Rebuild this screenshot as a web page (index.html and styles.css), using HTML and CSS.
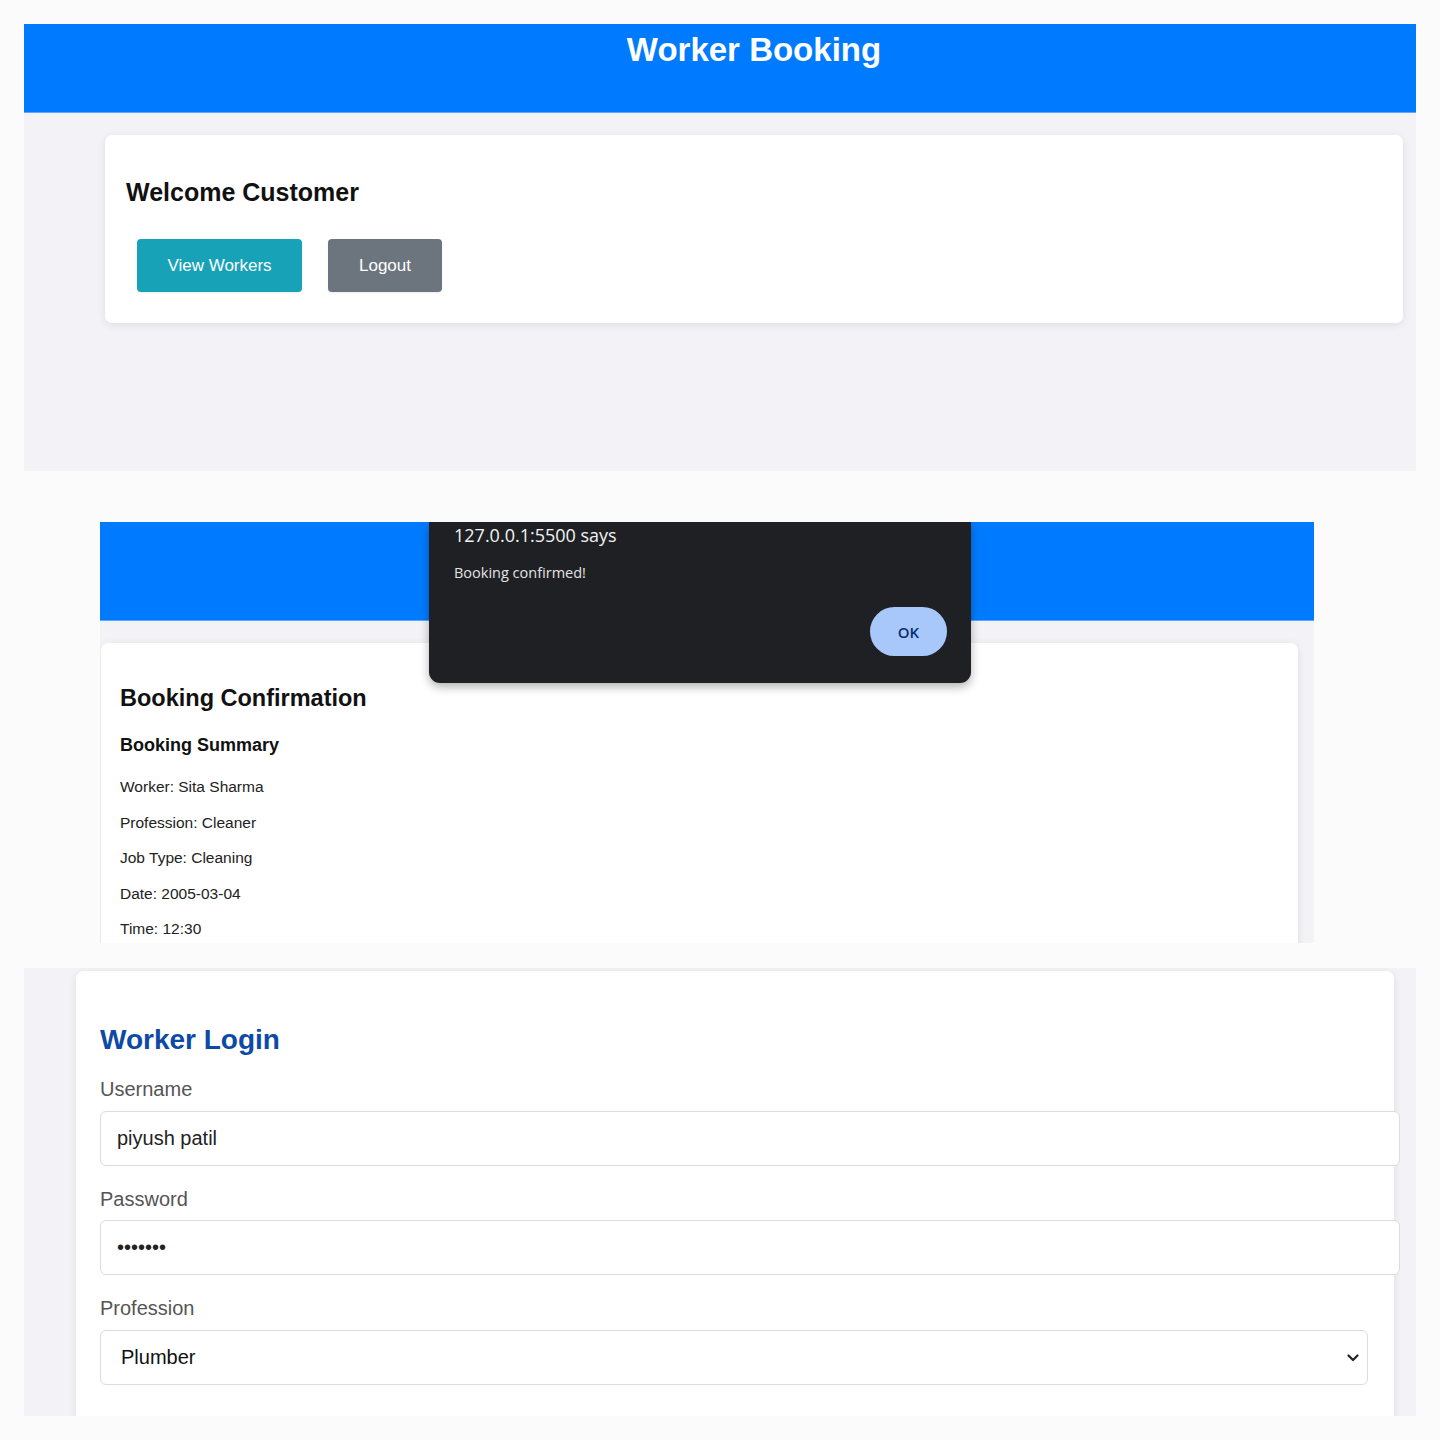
FILE: index.html
```html
<!DOCTYPE html>
<html lang="en">
<head>
<meta charset="utf-8">
<title>Worker Booking</title>
<link rel="stylesheet" href="styles.css">
</head>
<body>
<div class="collage">

  <section class="shot shot-home">
    <header class="topbar">
      <h1 class="brand">Worker Booking</h1>
    </header>
    <div class="card card-welcome">
      <h2 class="welcome-title">Welcome Customer</h2>
      <div class="btn-row">
        <button class="btn btn-info">View Workers</button>
        <button class="btn btn-secondary">Logout</button>
      </div>
    </div>
  </section>

  <section class="shot shot-confirm">
    <header class="topbar topbar-tall"></header>
    <div class="card card-confirm">
      <h2 class="confirm-title">Booking Confirmation</h2>
      <h3 class="summary-title">Booking Summary</h3>
      <p class="summary-line">Worker: Sita Sharma</p>
      <p class="summary-line">Profession: Cleaner</p>
      <p class="summary-line">Job Type: Cleaning</p>
      <p class="summary-line">Date: 2005-03-04</p>
      <p class="summary-line">Time: 12:30</p>
    </div>
    <div class="alert-dialog">
      <div class="alert-origin">127.0.0.1:5500 says</div>
      <div class="alert-message">Booking confirmed!</div>
      <div class="alert-actions">
        <button class="alert-ok">OK</button>
      </div>
    </div>
  </section>

  <section class="shot shot-login">
    <div class="card card-login">
      <h2 class="login-title">Worker Login</h2>
      <label class="field-label">Username</label>
      <input class="field-input" type="text" value="piyush patil">
      <label class="field-label">Password</label>
      <input class="field-input" type="password" value="1234567">
      <label class="field-label">Profession</label>
      <div class="select-wrap">
        <select class="field-select">
          <option>Plumber</option>
          <option>Electrician</option>
          <option>Cleaner</option>
        </select>
        <svg class="select-chevron" width="14" height="10" viewBox="0 0 14 10" aria-hidden="true">
          <path d="M2.5 2.5 L7 7 L11.5 2.5" fill="none" stroke="#222" stroke-width="2.2" stroke-linecap="round" stroke-linejoin="round"/>
        </svg>
      </div>
    </div>
  </section>

</div>
</body>
</html>
```

FILE: styles.css
```css
* {
  box-sizing: border-box;
}

html, body {
  margin: 0;
  padding: 0;
  background: #fbfbfc;
}

body {
  font-family: "Liberation Sans", Arial, sans-serif;
  color: #111;
}

.collage {
  padding: 24px 24px 0 24px;
  width: 1440px;
  height: 1440px;
}

.shot {
  background: #f3f3f7;
  overflow: hidden;
  position: relative;
}

/* ---------- panel 1 ---------- */
.shot-home {
  width: 1392px;
  height: 447px;
}

.topbar {
  background: #007bff;
  height: 89px;
  padding: 7px 0 0 68px;
  border-bottom: 1px solid #5aa6ff;
}

.brand {
  margin: 0;
  text-align: center;
  color: #fff;
  font-size: 33px;
  line-height: 38px;
  font-weight: 700;
}

.card {
  background: #fff;
  border-radius: 7px;
  box-shadow: 0 2px 8px rgba(0, 0, 0, 0.09);
}

.card-welcome {
  margin: 22px 13px 0 81px;
  height: 188px;
  padding: 43px 21px 0 21px;
}

.welcome-title {
  margin: 0;
  font-size: 25px;
  line-height: 29px;
  font-weight: 700;
  color: #111;
}

.btn-row {
  display: flex;
  gap: 26px;
  margin-top: 32px;
  padding-left: 11px;
}

.btn {
  height: 53px;
  border: none;
  border-radius: 4px;
  color: #fff;
  font-family: "Liberation Sans", Arial, sans-serif;
  font-size: 17px;
  padding: 0 30px;
  box-shadow: 0 1px 2px rgba(0, 0, 0, 0.08);
}

.btn-info {
  background: #17a2b8;
  width: 165px;
}

.btn-secondary {
  background: #6c757d;
  width: 114px;
}

/* ---------- panel 2 ---------- */
.shot-confirm {
  width: 1214px;
  height: 421px;
  margin: 51px 0 0 76px;
}

.topbar-tall {
  height: 99px;
  padding: 0;
}

.card-confirm {
  margin: 22px 16px 0 1px;
  height: 320px;
  padding: 41px 19px 0 19px;
  border-radius: 7px 7px 0 0;
}

.confirm-title {
  margin: 0;
  font-size: 23.5px;
  line-height: 28px;
  font-weight: 700;
  color: #111;
}

.summary-title {
  margin: 23px 0 0 0;
  font-size: 18px;
  line-height: 21px;
  font-weight: 700;
  color: #111;
}

.summary-line {
  margin: 0;
  font-size: 15.5px;
  line-height: 18px;
  color: #222;
}

.summary-title + .summary-line {
  margin-top: 22px;
}

.summary-line + .summary-line {
  margin-top: 17.5px;
}

.alert-dialog {
  position: absolute;
  top: 0;
  left: 329px;
  width: 542px;
  height: 161px;
  background: #1f2023;
  border-radius: 0 0 11px 11px;
  box-shadow: 0 4px 10px rgba(0, 0, 0, 0.3);
  padding: 0 24px 0 25px;
  font-family: "Open Sans", "Noto Sans", sans-serif;
  color: #e8eaed;
}

.alert-origin {
  font-size: 18px;
  line-height: 26px;
  color: #f1f3f4;
}

.alert-message {
  margin-top: 15px;
  font-size: 14.5px;
  line-height: 20px;
  color: #e3e3e3;
}

.alert-actions {
  display: flex;
  justify-content: flex-end;
  margin-top: 24px;
}

.alert-ok {
  width: 77px;
  height: 49px;
  border: none;
  border-radius: 25px;
  background: #a8c7fa;
  color: #062e6f;
  font-family: "Open Sans", "Noto Sans", sans-serif;
  font-size: 15px;
  font-weight: 600;
}

/* ---------- panel 3 ---------- */
.shot-login {
  width: 1392px;
  height: 448px;
  margin-top: 25px;
  padding-top: 3px;
  overflow: hidden;
}

.card-login {
  margin: 0 22px 0 52px;
  height: 500px;
  padding: 53px 24px 0 24px;
  border-radius: 8px;
  display: flex;
  flex-direction: column;
  align-items: flex-start;
}

.login-title {
  margin: 0;
  font-size: 28px;
  line-height: 32px;
  font-weight: 700;
  color: #0d4aa6;
}

.field-label {
  margin-top: 22px;
  font-size: 20px;
  line-height: 23px;
  color: #555;
}

.field-input {
  margin-top: 9.5px;
  width: 1300px;
  height: 55px;
  flex-shrink: 0;
  border: 1px solid #dcdcdc;
  border-radius: 6px;
  padding: 0 16px;
  font-family: "Liberation Sans", Arial, sans-serif;
  font-size: 20px;
  color: #222;
  background: #fff;
}

.select-wrap {
  margin-top: 9.5px;
  position: relative;
  width: 1268px;
  height: 55px;
  flex-shrink: 0;
}

.field-select {
  appearance: none;
  -webkit-appearance: none;
  width: 100%;
  height: 55px;
  border: 1px solid #dcdcdc;
  border-radius: 6px;
  padding: 0 20px;
  font-family: "Liberation Sans", Arial, sans-serif;
  font-size: 20px;
  color: #111;
  background: #fff;
}

.select-chevron {
  position: absolute;
  right: 8px;
  top: 23px;
  pointer-events: none;
}
```
